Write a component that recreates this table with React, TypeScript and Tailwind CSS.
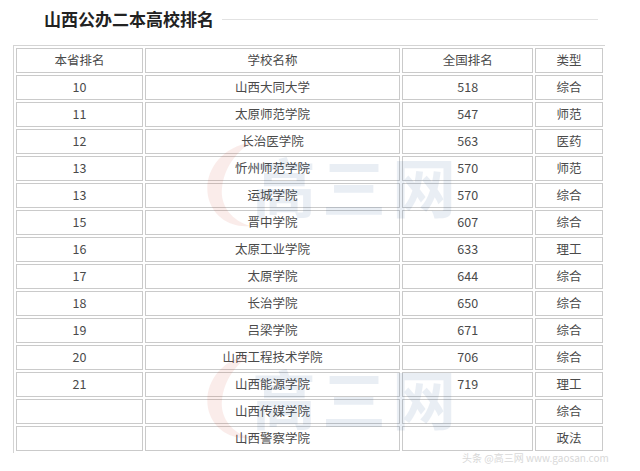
import React from "react";

const rows: [string, string, string, string][] = [
  ["10", "山西大同大学", "518", "综合"],
  ["11", "太原师范学院", "547", "师范"],
  ["12", "长治医学院", "563", "医药"],
  ["13", "忻州师范学院", "570", "师范"],
  ["13", "运城学院", "570", "综合"],
  ["15", "晋中学院", "607", "综合"],
  ["16", "太原工业学院", "633", "理工"],
  ["17", "太原学院", "644", "综合"],
  ["18", "长治学院", "650", "综合"],
  ["19", "吕梁学院", "671", "综合"],
  ["20", "山西工程技术学院", "706", "综合"],
  ["21", "山西能源学院", "719", "理工"],
  ["", "山西传媒学院", "", "综合"],
  ["", "山西警察学院", "", "政法"],
];

function Watermark({ top }: { top: number }) {
  return (
    <div
      className="pointer-events-none absolute left-[200px] flex items-center opacity-[0.09]"
      style={{ top }}
      aria-hidden
    >
      <svg width="60" height="100" viewBox="0 0 60 100">
        <path
          d="M52 8 C18 14 4 40 8 62 C12 82 30 94 50 92 C30 86 20 70 22 54 C24 34 36 18 52 8 Z"
          fill="#d0361f"
        />
      </svg>
      <span className="ml-[-8px] text-[64px] font-bold leading-none text-[#1d4f8f] tracking-[6px]">
        高三网
      </span>
    </div>
  );
}

export default function App() {
  const cell = "h-[25px] border border-[#cacaca] p-0 text-center align-middle";
  return (
    <div className="relative h-[471px] w-[640px] overflow-hidden bg-white font-['Noto_Sans_CJK_SC',sans-serif] text-[#4a4a4a]">
      <div className="flex items-center pl-[44px] pt-[7px]">
        <h2 className="text-[17px] font-bold leading-[24px] text-[#222]">山西公办二本高校排名</h2>
        <div className="ml-[8px] mr-[42px] h-px flex-1 bg-[#e2e2e2]" />
      </div>
      <div className="ml-[13px] mt-[14px] w-[592px] border-l border-t border-[#d4d4d4]">
        <table className="border-separate border-spacing-[2px] text-[12.5px] leading-none">
          <colgroup>
            <col className="w-[127px]" />
            <col className="w-[256px]" />
            <col className="w-[131px]" />
            <col className="w-[68px]" />
          </colgroup>
          <thead>
            <tr>
              <td className={cell}>本省排名</td>
              <td className={cell}>学校名称</td>
              <td className={cell}>全国排名</td>
              <td className={cell}>类型</td>
            </tr>
          </thead>
          <tbody>
            {rows.map((r, i) => (
              <tr key={i}>
                {r.map((v, j) => (
                  <td key={j} className={cell}>
                    {v}
                  </td>
                ))}
              </tr>
            ))}
          </tbody>
        </table>
      </div>
      <Watermark top={134} />
      <Watermark top={346} />
      <div className="pointer-events-none absolute left-[462px] top-[450px] text-[10px] text-[#d8d8d8]">
        头条 @高三网 www.gaosan.com
      </div>
    </div>
  );
}
